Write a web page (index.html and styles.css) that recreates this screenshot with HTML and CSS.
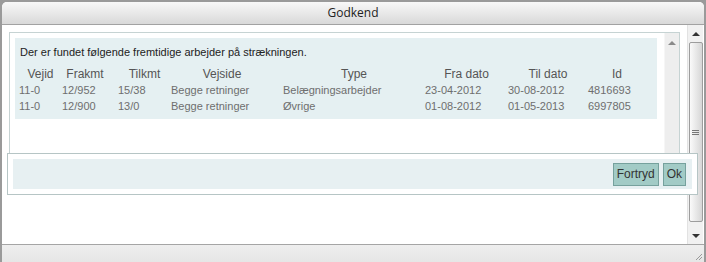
FILE: index.html
```html
<!DOCTYPE html>
<html lang="da">
  <head>
    <meta charset="UTF-8" />
    <title>Godkend</title>
    <link rel="stylesheet" href="styles.css">
  </head>
  <body>
    <div class="window">
      <div class="titlebar">Godkend</div>
      <div class="content">
        <div class="main">
          <div class="panel">
            <div class="panel-body">
              <div class="info">
                <p class="intro">Der er fundet følgende fremtidige arbejder på strækningen.</p>
                <table class="works">
                  <thead>
                    <tr>
                      <th class="c-vejid">Vejid</th>
                      <th class="c-fra shift">Frakmt</th>
                      <th class="c-til">Tilkmt</th>
                      <th class="c-side shift">Vejside</th>
                      <th class="c-type">Type</th>
                      <th class="c-dato">Fra dato</th>
                      <th class="c-dato2">Til dato</th>
                      <th class="c-id">Id</th>
                    </tr>
                  </thead>
                  <tbody>
                    <tr>
                      <td>11-0</td>
                      <td>12/952</td>
                      <td>15/38</td>
                      <td>Begge retninger</td>
                      <td>Belægningsarbejder</td>
                      <td>23-04-2012</td>
                      <td>30-08-2012</td>
                      <td>4816693</td>
                    </tr>
                    <tr>
                      <td>11-0</td>
                      <td>12/900</td>
                      <td>13/0</td>
                      <td>Begge retninger</td>
                      <td>Øvrige</td>
                      <td>01-08-2012</td>
                      <td>01-05-2013</td>
                      <td>6997805</td>
                    </tr>
                  </tbody>
                </table>
              </div>
            </div>
            <div class="inner-scroll">
              <span class="arrow up"></span>
            </div>
          </div>
        </div>
        <div class="scrollbar">
          <div class="sb-btn"><span class="arrow up dark"></span></div>
          <div class="thumb"><span class="grip"></span></div>
          <div class="sb-btn bottom"><span class="arrow down dark"></span></div>
        </div>
      </div>
      <div class="statusbar">
        <svg class="resize" width="9" height="9" viewBox="0 0 9 9">
          <path d="M8 2 L2 8 M8 5 L5 8" stroke="#9a9a9a" stroke-width="1" fill="none" />
        </svg>
      </div>

      <div class="buttonpane">
        <div class="buttonset">
          <button>Fortryd</button>
          <button>Ok</button>
        </div>
      </div>
    </div>
  </body>
</html>
```

FILE: styles.css
```css
* {
  margin: 0;
  padding: 0;
  box-sizing: border-box;
}
body {
  background: #9a9a9a;
  font-family: "Liberation Sans", Arial, sans-serif;
  font-size: 11px;
  overflow: hidden;
}
.window {
  position: relative;
  margin: 2px 2px 0;
  height: 260px;
  background: #fff;
  display: flex;
  flex-direction: column;
  border-radius: 5px 5px 0 0;
}
.titlebar {
  height: 23px;
  line-height: 22px;
  text-align: center;
  font-family: "Open Sans", "Noto Sans", sans-serif;
  font-size: 12px;
  color: #222;
  background: linear-gradient(#f8f8f8, #d9d9d9);
  border-bottom: 1px solid #a2a2a2;
  border-radius: 5px 5px 0 0;
}
.content {
  height: 219px;
  display: flex;
}
.main {
  flex: 1;
}
.panel {
  margin: 7px 7px 0 7px;
  height: 150px;
  border: 1px solid #c6d3d3;
  border-bottom: 0;
  display: flex;
}
.panel-body {
  flex: 1;
  padding: 5px 7px 5px 5px;
}
.info {
  background: #e5f0f2;
  padding: 7px 4px 5px 4px;
}
.intro {
  line-height: 14px;
  margin-left: 1px;
  color: #222;
  margin-bottom: 7px;
}
.works {
  border-collapse: collapse;
  table-layout: fixed;
}
.works th,
.works td {
  height: 16px;
  line-height: 16px;
  padding: 0;
  white-space: nowrap;
}
.works th {
  font-size: 12px;
  font-weight: normal;
  color: #555;
  text-align: center;
}
.works th.shift {
  padding-right: 10px;
}
.works td {
  color: #6e6e6e;
}
.c-vejid { width: 43px; }
.c-fra { width: 56px; }
.c-til { width: 53px; }
.c-side { width: 112px; }
.c-type { width: 142px; }
.c-dato { width: 83px; }
.c-dato2 { width: 80px; }
.c-id { width: 58px; }

.inner-scroll {
  width: 15px;
  background: #eeeeee;
  border-left: 1px solid #f6f6f6;
  display: flex;
  justify-content: center;
  padding-top: 8px;
}
.arrow {
  display: block;
  width: 0;
  height: 0;
  border-left: 4px solid transparent;
  border-right: 4px solid transparent;
}
.arrow.up {
  border-bottom: 4px solid #8a8a8a;
}
.arrow.down {
  border-top: 4px solid #8a8a8a;
}
.arrow.up.dark {
  border-bottom-color: #333;
}
.arrow.down.dark {
  border-top-color: #333;
}
.scrollbar {
  width: 16px;
  margin-right: 1px;
  background: #f1f1f1;
  border-left: 1px solid #e2e2e2;
  display: flex;
  flex-direction: column;
  align-items: center;
}
.sb-btn {
  height: 17px;
  width: 100%;
  display: flex;
  align-items: center;
  justify-content: center;
}
.sb-btn.bottom {
  margin-top: auto;
}
.thumb {
  width: 14px;
  height: 180px;
  border: 1px solid #9d9d9d;
  border-radius: 2px;
  background: linear-gradient(to right, #fafafa, #e8e8e8 50%, #d6d6d6);
  display: flex;
  align-items: center;
  justify-content: center;
}
.grip {
  width: 7px;
  height: 5px;
  border-top: 1px solid #777;
  border-bottom: 1px solid #777;
  background: linear-gradient(transparent 1px, #777 1px, #777 2px, transparent 2px);
}
.statusbar {
  height: 18px;
  border-top: 1px solid #a5a5a5;
  background: linear-gradient(#eeeeee, #e6e6e6);
  display: flex;
  justify-content: flex-end;
  align-items: flex-end;
  padding: 0 1px 1px 0;
}
.buttonpane {
  position: absolute;
  left: 5px;
  top: 151px;
  width: 691px;
  height: 42px;
  padding: 5px;
  background: #fff;
  border: 1px solid #b6c5c5;
}
.buttonset {
  height: 30px;
  background: #e7f0f2;
  display: flex;
  justify-content: flex-end;
  align-items: center;
  gap: 4px;
  padding-right: 6px;
}
.buttonset button {
  height: 23px;
  padding: 0 3px;
  font-family: "Liberation Sans", Arial, sans-serif;
  font-size: 12px;
  color: #333;
  background: #a2cbc6;
  border: 1px solid #76a19d;
}
```
